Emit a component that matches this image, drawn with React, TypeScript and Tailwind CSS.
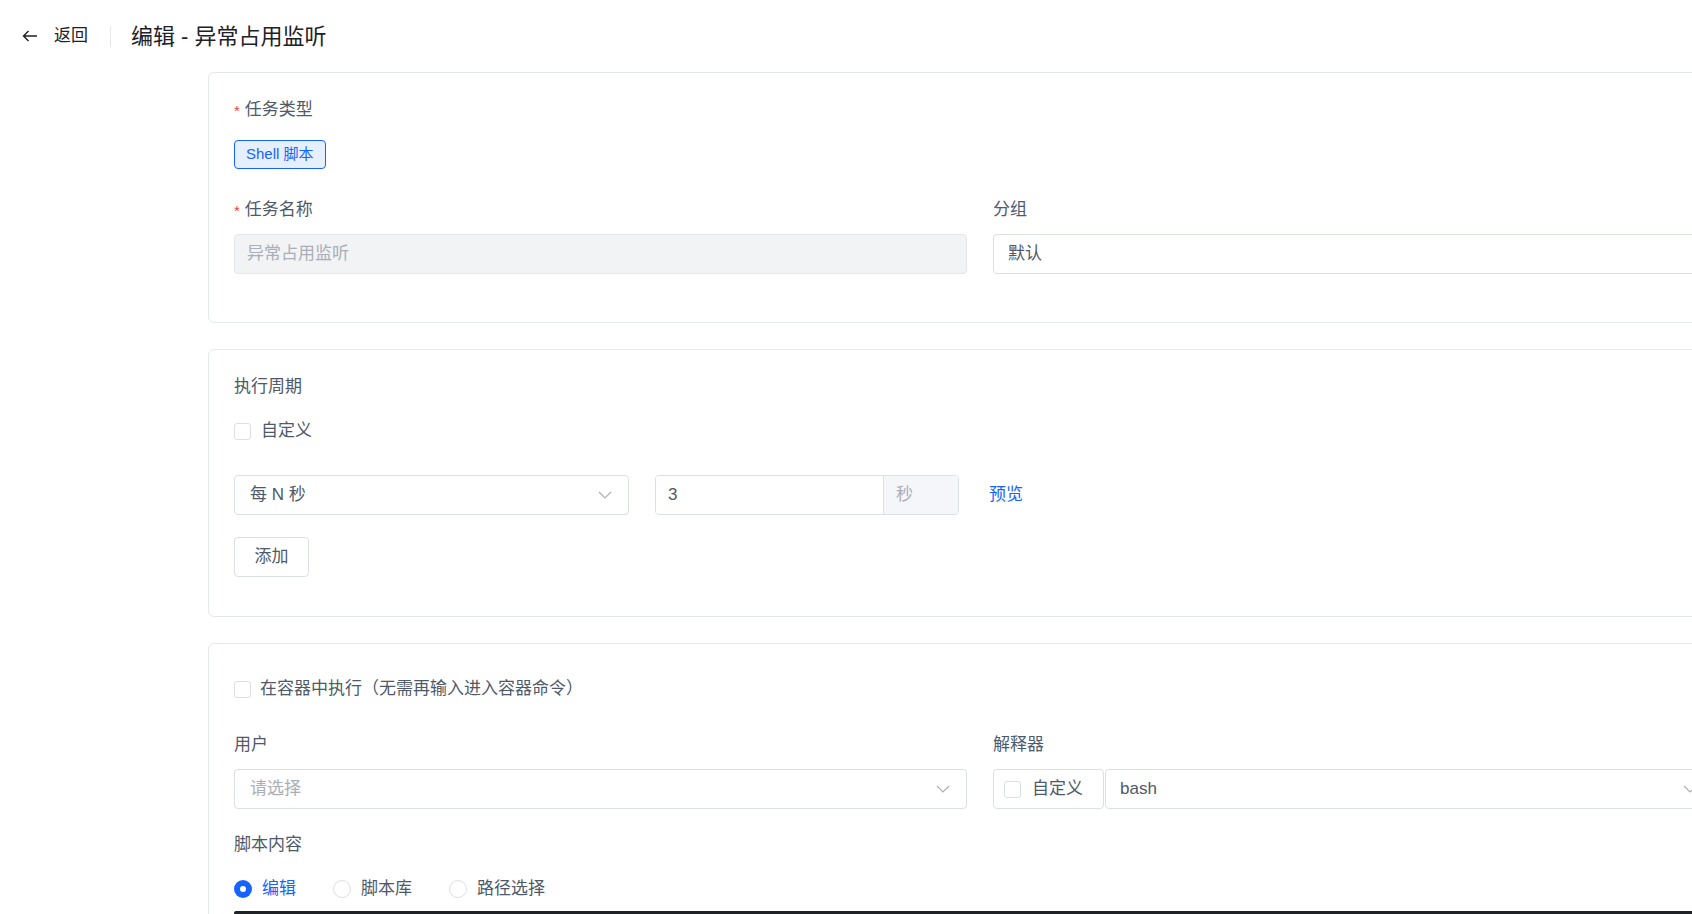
import React from "react";

const FONT = '"Liberation Sans", "Noto Sans CJK SC", sans-serif';

function Chevron({ className = "" }: { className?: string }) {
  return (
    <svg width="14" height="8" viewBox="0 0 14 8" className={className} fill="none">
      <path d="M1 1l6 6 6-6" stroke="#a9aeb8" strokeWidth="1.1" />
    </svg>
  );
}

function Checkbox() {
  return <span className="inline-block w-[17px] h-[17px] rounded-[3px] border border-[#dcdfe6] bg-white shrink-0" />;
}

function Label({ children, required }: { children: React.ReactNode; required?: boolean }) {
  return (
    <div className="h-[24px] leading-[24px] text-[17px] text-[#4e5969] flex items-center">
      {required && <span className="text-[#f53f3f] text-[15px] mr-[5px] mt-[2px]">*</span>}
      {children}
    </div>
  );
}

function Radio({ checked, label }: { checked?: boolean; label: string }) {
  return (
    <div className="flex items-center">
      {checked ? (
        <span className="w-[18px] h-[18px] rounded-full bg-[#1664ff] flex items-center justify-center">
          <span className="w-[6px] h-[6px] rounded-full bg-white" />
        </span>
      ) : (
        <span className="w-[18px] h-[18px] rounded-full border border-[#dcdfe6] bg-white" />
      )}
      <span className={"ml-[10px] text-[17px] " + (checked ? "text-[#1664ff]" : "text-[#4e5969]")}>{label}</span>
    </div>
  );
}

export default function App() {
  return (
    <div className="w-full h-[914px] overflow-hidden bg-white" style={{ fontFamily: FONT }}>
      <div className="h-[72px] flex items-center pl-[22px]">
        <svg width="16" height="12" viewBox="0 0 16 12" fill="none">
          <path d="M15 6H1.5M6.5 1L1.5 6l5 5" stroke="#1d2129" strokeWidth="1.4" />
        </svg>
        <span className="ml-[16px] text-[17px] text-[#1d2129]">返回</span>
        <span className="ml-[22px] w-px h-[21px] bg-[#e5e6eb]" />
        <span className="ml-[20px] text-[22px] text-[#1d2129]">编辑 - 异常占用监听</span>
      </div>

      <div className="ml-[208px] w-[1542px] flex flex-col gap-[26px]">
        {/* Card 1 */}
        <div className="border border-[#e5e8ef] rounded-[6px] px-[25px] pt-[25px] pb-[48px]">
          <Label required>任务类型</Label>
          <div className="mt-[12px] h-[40px] flex items-center">
            <span className="h-[29px] px-[11px] flex items-center rounded-[4px] border border-[#1664ff] bg-[#e6effe] text-[15px] text-[#1664ff]">
              Shell 脚本
            </span>
          </div>
          <div className="mt-[24px] grid grid-cols-[733px_733px] gap-x-[26px]">
            <div>
              <Label required>任务名称</Label>
              <div className="mt-[12px] h-[40px] rounded-[4px] border border-[#e5e6eb] bg-[#f2f3f5] px-[12px] flex items-center text-[17px] text-[#a9aeb8]">
                异常占用监听
              </div>
            </div>
            <div>
              <Label>分组</Label>
              <div className="mt-[12px] h-[40px] rounded-[4px] border border-[#dcdfe6] bg-white px-[14px] flex items-center text-[17px] text-[#4e5969]">
                默认
              </div>
            </div>
          </div>
        </div>

        {/* Card 2 */}
        <div className="border border-[#e5e8ef] rounded-[6px] px-[25px] pt-[25px] pb-[39px]">
          <Label>执行周期</Label>
          <div className="mt-[12px] h-[40px] flex items-center">
            <Checkbox />
            <span className="ml-[10px] text-[17px] text-[#4e5969]">自定义</span>
          </div>
          <div className="mt-[24px] flex items-center">
            <div className="w-[395px] h-[40px] rounded-[4px] border border-[#dcdfe6] bg-white pl-[15px] pr-[16px] flex items-center justify-between text-[17px] text-[#4e5969]">
              <span>每 N 秒</span>
              <Chevron />
            </div>
            <div className="ml-[26px] w-[304px] h-[40px] rounded-[4px] border border-[#dcdfe6] flex overflow-hidden">
              <div className="flex-1 bg-white px-[12px] flex items-center text-[17px] text-[#4e5969]">3</div>
              <div className="w-[75px] border-l border-[#dcdfe6] bg-[#f5f6f9] px-[12px] flex items-center text-[17px] text-[#a9aeb8]">秒</div>
            </div>
            <span className="ml-[30px] text-[17px] text-[#1664ff]">预览</span>
          </div>
          <div className="mt-[22px] w-[75px] h-[40px] rounded-[4px] border border-[#dcdfe6] flex items-center justify-center text-[17px] text-[#4e5969]">
            添加
          </div>
        </div>

        {/* Card 3 */}
        <div className="border border-[#e5e8ef] rounded-[6px] px-[25px] pt-[25px] pb-[40px]">
          <div className="h-[40px] flex items-center">
            <Checkbox />
            <span className="ml-[9px] text-[17px] text-[#4e5969]">在容器中执行（无需再输入进入容器命令）</span>
          </div>
          <div className="mt-[24px] grid grid-cols-[733px_733px] gap-x-[26px]">
            <div>
              <Label>用户</Label>
              <div className="mt-[12px] h-[40px] rounded-[4px] border border-[#dcdfe6] bg-white pl-[15px] pr-[16px] flex items-center justify-between text-[17px] text-[#a9aeb8]">
                <span>请选择</span>
                <Chevron />
              </div>
            </div>
            <div>
              <Label>解释器</Label>
              <div className="mt-[12px] h-[40px] flex w-[721px]">
                <div className="w-[111px] h-full rounded-[4px] border border-[#dcdfe6] bg-white pl-[10px] flex items-center">
                  <Checkbox />
                  <span className="ml-[11px] text-[17px] text-[#4e5969]">自定义</span>
                </div>
                <div className="ml-[1px] flex-1 h-full rounded-[4px] border border-[#dcdfe6] bg-white pl-[14px] pr-[16px] flex items-center justify-between text-[17px] text-[#4e5969]">
                  <span>bash</span>
                  <Chevron />
                </div>
              </div>
            </div>
          </div>
          <div className="mt-[24px]">
            <Label>脚本内容</Label>
            <div className="mt-[12px] h-[40px] flex items-center gap-[37px]">
              <Radio checked label="编辑" />
              <Radio label="脚本库" />
              <Radio label="路径选择" />
            </div>
            <div className="mt-[2px] h-[300px] bg-[#1f2226] rounded-t-[2px]" />
          </div>
        </div>
      </div>
    </div>
  );
}
